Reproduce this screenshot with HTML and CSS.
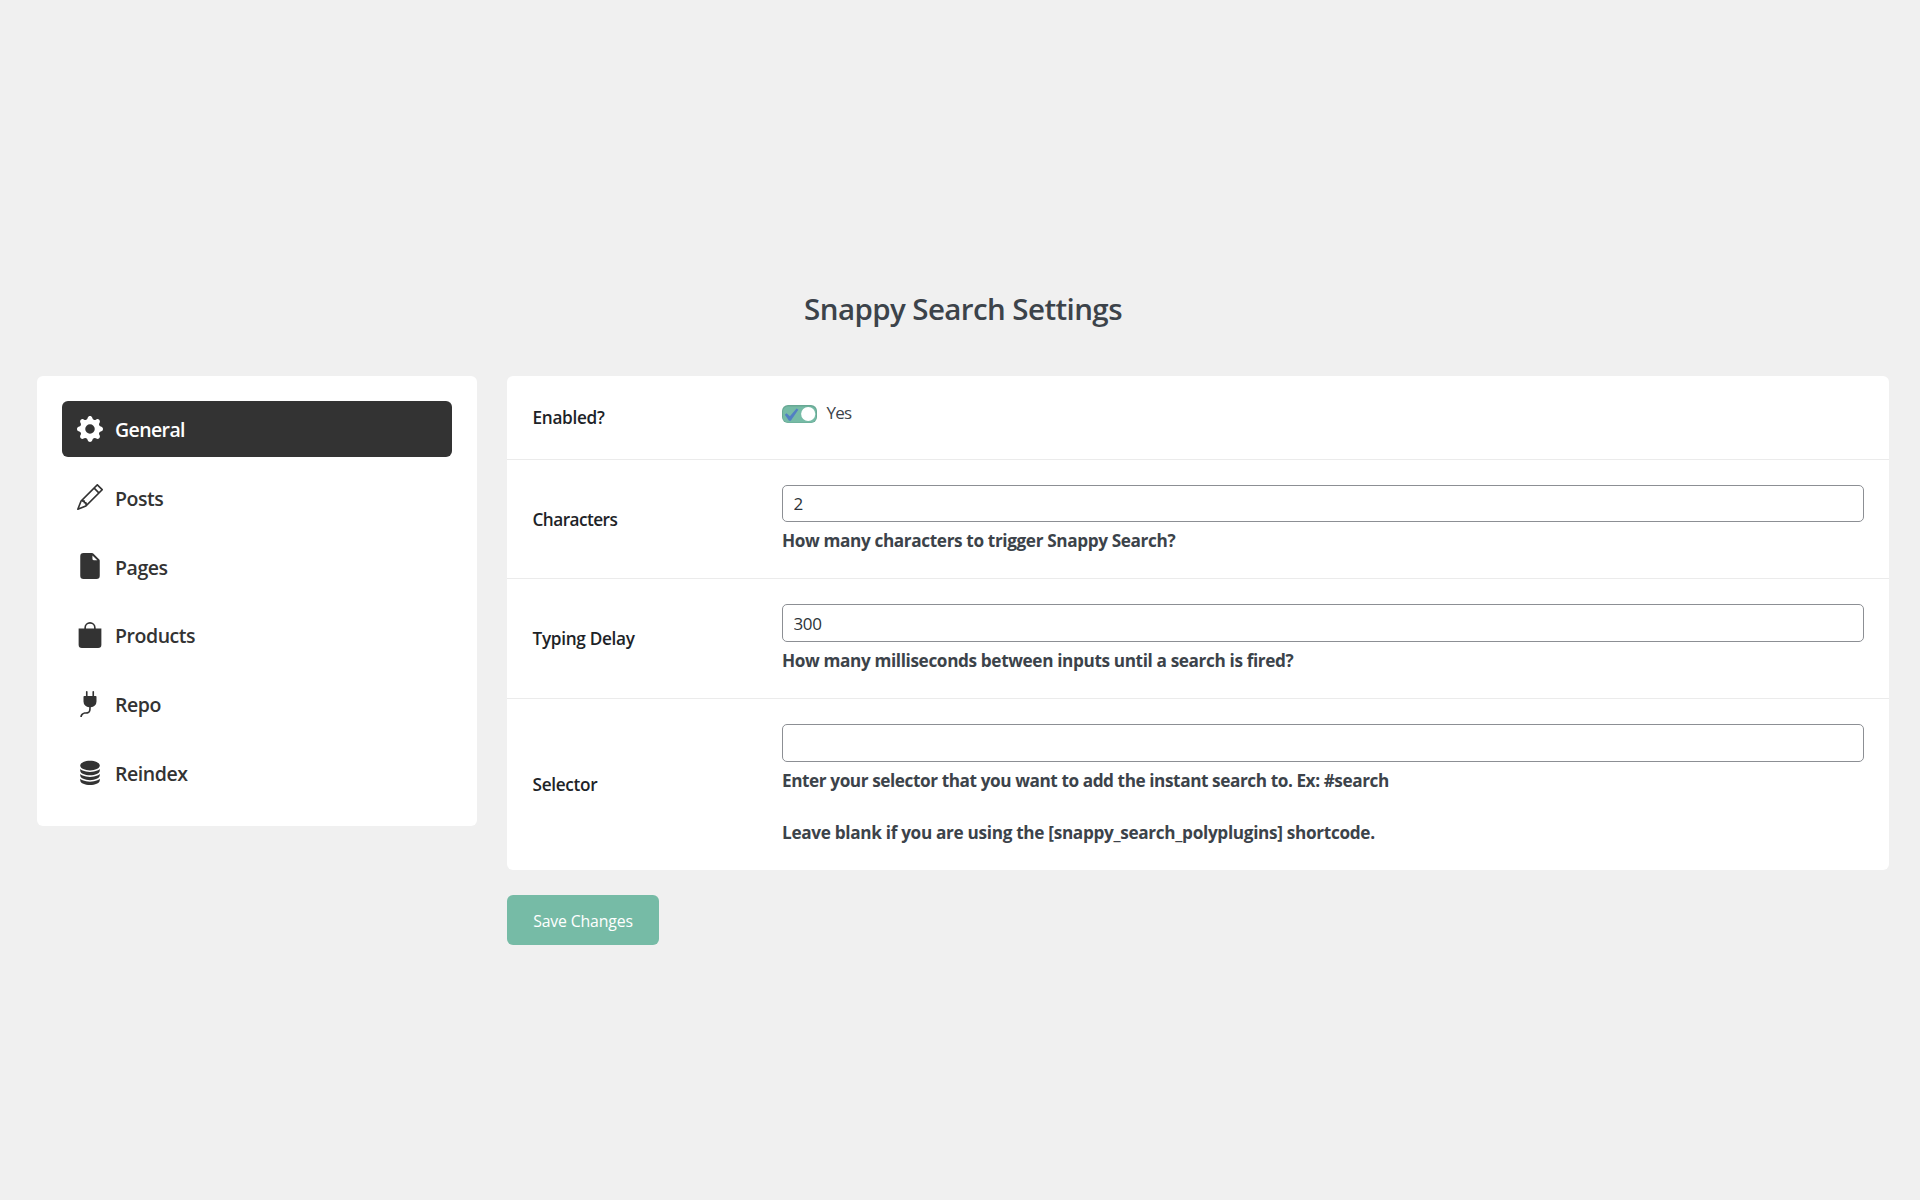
FILE: index.html
```
<!DOCTYPE html>
<html lang="en">
<head>
<meta charset="utf-8">
<title>Snappy Search Settings</title>
<link rel="stylesheet" href="styles.css">
</head>
<body>
<main class="page">
  <h1 class="title">Snappy Search Settings</h1>
  <div class="layout">
    <nav class="sidebar">
      <a class="nav-item active"><svg class="icon" viewBox="0 0 16 16"><path d="M9.405 1.05c-.413-1.4-2.397-1.4-2.81 0l-.1.34a1.464 1.464 0 0 1-2.105.872l-.31-.17c-1.283-.698-2.686.705-1.987 1.987l.169.311c.446.82.023 1.841-.872 2.105l-.34.1c-1.4.413-1.4 2.397 0 2.81l.34.1a1.464 1.464 0 0 1 .872 2.105l-.17.31c-.698 1.283.705 2.686 1.987 1.987l.311-.169a1.464 1.464 0 0 1 2.105.872l.1.34c.413 1.4 2.397 1.4 2.81 0l.1-.34a1.464 1.464 0 0 1 2.105-.872l.31.17c1.283.698 2.686-.705 1.987-1.987l-.169-.311a1.464 1.464 0 0 1 .872-2.105l.34-.1c1.4-.413 1.4-2.397 0-2.81l-.34-.1a1.464 1.464 0 0 1-.872-2.105l.17-.31c.698-1.283-.705-2.686-1.987-1.987l-.311.169a1.464 1.464 0 0 1-2.105-.872zM8 10.93a2.929 2.929 0 1 1 0-5.86 2.929 2.929 0 0 1 0 5.858z"/></svg>General</a>
      <a class="nav-item"><svg class="icon" viewBox="0 0 16 16"><path d="M12.146.146a.5.5 0 0 1 .708 0l3 3a.5.5 0 0 1 0 .708l-10 10a.5.5 0 0 1-.168.11l-5 2a.5.5 0 0 1-.65-.65l2-5a.5.5 0 0 1 .11-.168zM11.207 2.5 13.5 4.793 14.793 3.5 12.5 1.207zm1.586 3L10.5 3.207 4 9.707V10h.5a.5.5 0 0 1 .5.5v.5h.5a.5.5 0 0 1 .5.5v.5h.293zm-9.761 5.175-.106.106-1.528 3.821 3.821-1.528.106-.106A.5.5 0 0 1 5 12.5V12h-.5a.5.5 0 0 1-.5-.5V11h-.5a.5.5 0 0 1-.468-.325"/></svg>Posts</a>
      <a class="nav-item"><svg class="icon" viewBox="0 0 16 16"><path d="M4 0h5.293A1 1 0 0 1 10 .293L13.707 4a1 1 0 0 1 .293.707V14a2 2 0 0 1-2 2H4a2 2 0 0 1-2-2V2a2 2 0 0 1 2-2m5.5 1.5v2a1 1 0 0 0 1 1h2z"/></svg>Pages</a>
      <a class="nav-item"><svg class="icon" viewBox="0 0 16 16"><path d="M8 1a2.5 2.5 0 0 1 2.5 2.5V4h-5v-.5A2.5 2.5 0 0 1 8 1m3.5 3v-.5a3.5 3.5 0 1 0-7 0V4H1v10a2 2 0 0 0 2 2h10a2 2 0 0 0 2-2V4z"/></svg>Products</a>
      <a class="nav-item"><svg class="icon" viewBox="0 0 16 16"><path d="M6 0a.5.5 0 0 1 .5.5V3h3V.5a.5.5 0 0 1 1 0V3h1a.5.5 0 0 1 .5.5v3A3.5 3.5 0 0 1 8.5 10c-.002.434-.01.845-.04 1.22-.041.514-.126 1.003-.317 1.424a2.08 2.08 0 0 1-.97 1.028C6.725 13.9 6.169 14 5.5 14c-.998 0-1.61.33-1.974.718A1.92 1.92 0 0 0 3 16H2c0-.616.232-1.367.797-1.968C3.374 13.42 4.261 13 5.5 13c.581 0 .962-.088 1.218-.219.241-.123.4-.3.514-.55.121-.266.193-.621.23-1.09.027-.34.035-.718.037-1.141A3.5 3.5 0 0 1 4 6.5v-3a.5.5 0 0 1 .5-.5h1V.5A.5.5 0 0 1 6 0"/></svg>Repo</a>
      <a class="nav-item"><svg class="icon" viewBox="0 0 16 16"><path d="M3.904 1.777C4.978 1.289 6.427 1 8 1s3.022.289 4.096.777C13.125 2.245 14 2.993 14 4s-.875 1.755-1.904 2.223C11.022 6.711 9.573 7 8 7s-3.022-.289-4.096-.777C2.875 5.755 2 5.007 2 4s.875-1.755 1.904-2.223"/><path d="M2 6.161V7c0 1.007.875 1.755 1.904 2.223C4.978 9.71 6.427 10 8 10s3.022-.289 4.096-.777C13.125 8.755 14 8.007 14 7v-.839c-.457.432-1.004.751-1.49.972C11.278 7.693 9.682 8 8 8s-3.278-.307-4.51-.867c-.486-.22-1.033-.54-1.49-.972"/><path d="M2 9.161V10c0 1.007.875 1.755 1.904 2.223C4.978 12.711 6.427 13 8 13s3.022-.289 4.096-.777C13.125 11.755 14 11.007 14 10v-.839c-.457.432-1.004.751-1.49.972-1.232.56-2.828.867-4.51.867s-3.278-.307-4.51-.867c-.486-.22-1.033-.54-1.49-.972"/><path d="M2 12.161V13c0 1.007.875 1.755 1.904 2.223C4.978 15.711 6.427 16 8 16s3.022-.289 4.096-.777C13.125 14.755 14 14.007 14 13v-.839c-.457.432-1.004.751-1.49.972-1.232.56-2.828.867-4.51.867s-3.278-.307-4.51-.867c-.486-.22-1.033-.54-1.49-.972"/></svg>Reindex</a>
    </nav>
    <form class="settings">
      <div class="card">
        <div class="row row-switch">
          <span class="label">Enabled?</span>
          <div class="switch-field">
            <svg class="switch" viewBox="0 0 35 18">
              <rect class="switch-edge" width="35" height="18" rx="6"/>
              <rect class="switch-track" x="1" y="1.5" width="33" height="16" rx="5"/>
              <path class="switch-check" transform="translate(-4.7 -2.8) scale(1.3)" d="M14.83 4.89l1.34.94-5.81 8.38H9.02L5.78 9.67l1.34-1.25 2.57 2.4z"/>
              <circle class="switch-knob" cx="26.2" cy="9" r="7.1"/>
            </svg>
            <span class="switch-text">Yes</span>
          </div>
        </div>
        <div class="row row-short">
          <label class="label label-tight" for="characters">Characters</label>
          <div class="field">
            <input class="input input-short" id="characters" type="text" value="2">
            <p class="help">How many characters to trigger Snappy Search?</p>
          </div>
        </div>
        <div class="row">
          <label class="label" for="delay">Typing Delay</label>
          <div class="field">
            <input class="input" id="delay" type="text" value="300">
            <p class="help">How many milliseconds between inputs until a search is fired?</p>
          </div>
        </div>
        <div class="row row-tall">
          <label class="label" for="selector">Selector</label>
          <div class="field">
            <input class="input" id="selector" type="text">
            <p class="help help-long">Enter your selector that you want to add the instant search to. Ex: #search</p>
            <p class="help help-second">Leave blank if you are using the [snappy_search_polyplugins] shortcode.</p>
          </div>
        </div>
      </div>
      <button class="save" type="button">Save Changes</button>
    </form>
  </div>
</main>
</body>
</html>
```
FILE: styles.css
```
* {
  box-sizing: border-box;
}

body {
  margin: 0;
  background: #f0f0f0;
  color: #3c434a;
  font-family: "Open Sans", "Noto Sans", sans-serif;
}

.page {
  padding: 288px 31px 0 37px;
}

.title {
  margin: 0 0 47px;
  font-size: 29.5px;
  font-weight: 550;
  line-height: 41px;
  letter-spacing: -0.58px;
  text-align: center;
}

.layout {
  display: grid;
  grid-template-columns: 440px 1fr;
  gap: 30px;
  align-items: start;
}

.sidebar {
  display: flex;
  flex-direction: column;
  gap: 12.8px;
  padding: 25px;
  border-radius: 6px;
  background: #fff;
}

.nav-item {
  display: flex;
  align-items: center;
  gap: 12.3px;
  height: 56px;
  padding: 1px 14.7px 0;
  border-radius: 6px;
  color: #333;
  font-size: 19.5px;
  font-weight: 550;
  letter-spacing: -0.45px;
}

.nav-item.active {
  background: #333;
  color: #fff;
  font-weight: 600;
  letter-spacing: -0.6px;
}

.icon {
  width: 26px;
  height: 26px;
  margin-bottom: 2px;
  fill: currentColor;
}

.card {
  border-radius: 6px;
  background: #fff;
}

.row {
  display: grid;
  grid-template-columns: 249.5px 1fr;
  align-items: center;
  height: 120px;
  padding: 0 25px 0 25.5px;
  border-bottom: 1px solid #ebebeb;
}

.row-switch {
  height: 84px;
}

.row-short {
  height: 119px;
}

.row-tall {
  height: 171px;
  border-bottom: 0;
}

.label {
  color: #1d2327;
  font-size: 17.2px;
  font-weight: 550;
  letter-spacing: -0.3px;
}

.label-tight {
  letter-spacing: -0.55px;
}

.switch-field {
  display: flex;
  align-items: flex-start;
  align-self: start;
  gap: 9.5px;
  padding-top: 29px;
}

.switch {
  width: 35px;
  height: 18px;
}

.switch-edge {
  fill: #68a894;
}

.switch-track {
  fill: #76bba6;
}

.switch-check {
  fill: #527fc4;
}

.switch-knob {
  fill: #fff;
}

.switch-text {
  font-size: 17px;
  font-weight: 400;
  line-height: 16px;
  letter-spacing: -0.8px;
}

.field {
  align-self: start;
  padding-top: 25px;
}

.input {
  display: block;
  width: 100%;
  height: 38px;
  padding: 0 10.5px;
  border: 1px solid #8c8f94;
  border-radius: 5px;
  background: #fff;
  color: #2c3338;
  font-family: inherit;
  font-size: 17px;
  font-weight: 400;
  letter-spacing: -0.4px;
}

.input-short {
  height: 37px;
}

.help {
  margin: 6px 0 0;
  font-size: 17.2px;
  font-weight: 700;
  line-height: 26px;
  letter-spacing: -0.37px;
}

.help-long {
  letter-spacing: -0.42px;
}

.help-second {
  margin-top: 26px;
  letter-spacing: -0.32px;
}

.save {
  display: block;
  width: 152px;
  height: 50px;
  margin-top: 25px;
  padding: 2px 0 0;
  border: 0;
  border-radius: 6px;
  background: #76bba6;
  color: #fff;
  font-family: inherit;
  font-size: 15.8px;
  font-weight: 400;
  letter-spacing: -0.15px;
}
```
